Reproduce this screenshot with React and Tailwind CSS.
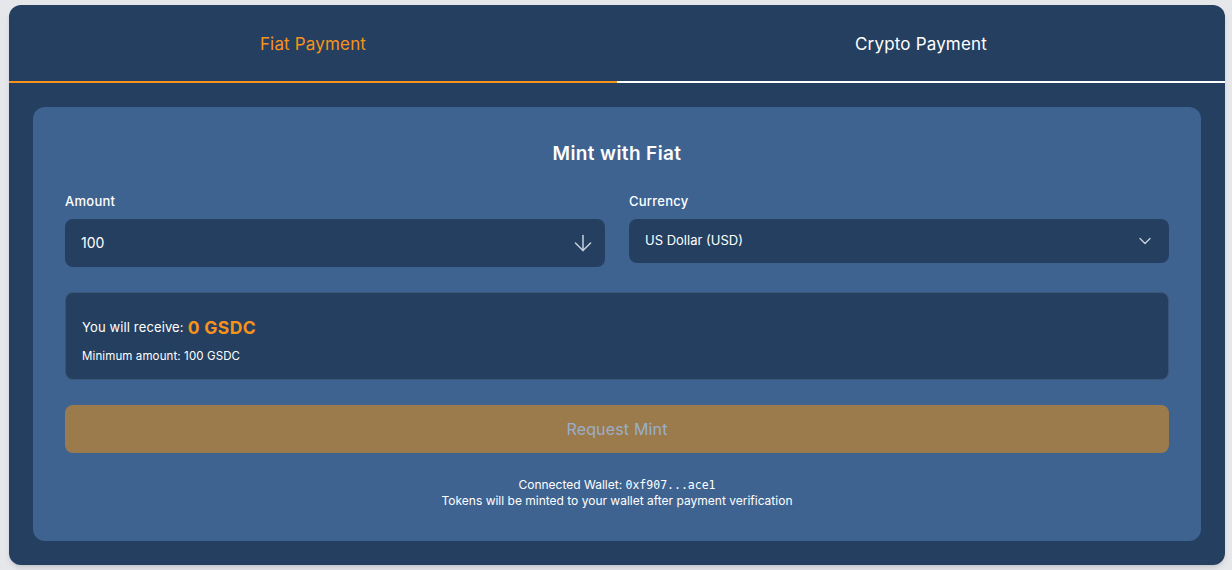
import { ArrowDown, ChevronDown } from "lucide-react";

export default function App() {
  return (
    <div
      className="min-h-[570px] w-full bg-[#e5e7eb] pl-[9px] pr-[7px] pt-[5px]"
      style={{ fontFamily: "Inter, 'Noto Sans', sans-serif" }}
    >
      <div className="overflow-hidden rounded-xl bg-[#253f60] shadow-md">
        <div className="flex">
          <button className="flex h-[78px] flex-1 items-center justify-center border-b-2 border-[#f7931a] pt-[3px] text-[17px] tracking-[0.01em] text-[#f7931a]">
            Fiat Payment
          </button>
          <button className="flex h-[78px] flex-1 items-center justify-center border-b-2 border-white pt-[3px] text-[17px] tracking-[0.01em] text-white">
            Crypto Payment
          </button>
        </div>

        <div className="p-6">
          <div className="rounded-xl bg-[#3e6390] px-8 pb-8 pt-[33px]">
            <h2 className="text-center text-[19px] leading-7 font-semibold tracking-[0.02em] text-white">
              Mint with Fiat
            </h2>

            <div className="mt-[23px] grid grid-cols-2 gap-6">
              <div>
                <label className="block text-[13px] leading-5 font-medium tracking-[0.02em] text-white">Amount</label>
                <div className="mt-2 flex h-12 items-center justify-between rounded-lg bg-[#253f60] pl-4 pr-[9px]">
                  <span className="text-sm text-white">100</span>
                  <ArrowDown className="h-[26px] w-[26px] text-[#c8d0dc]" strokeWidth={1.4} />
                </div>
              </div>
              <div>
                <label className="block text-[13px] leading-5 font-medium tracking-[0.02em] text-white">Currency</label>
                <div className="mt-2 flex h-11 items-center justify-between rounded-lg bg-[#253f60] pl-4 pr-[14px]">
                  <span className="text-[13px] text-white">US Dollar (USD)</span>
                  <ChevronDown className="h-5 w-5 text-[#c8d0dc]" strokeWidth={1.6} />
                </div>
              </div>
            </div>

            <div className="mt-[25px] h-[88px] rounded-lg border border-[#3b5577] bg-[#253f60] px-4 pt-[23px]">
              <div className="flex h-6 items-center text-[13px] tracking-[0.01em] text-white">
                You will receive:
                <span className="ml-1 text-[17.5px] font-bold tracking-[0.02em] text-[#f7931a]">0 GSDC</span>
              </div>
              <div className="mt-[8px] text-[11.5px] leading-4 tracking-[0.01em] text-white">
                Minimum amount: 100 GSDC
              </div>
            </div>

            <button className="mt-[25px] flex h-12 w-full items-center justify-center rounded-lg bg-[#9b7b4b] text-[16px] tracking-[0.01em] text-[#9aaecb]">
              Request Mint
            </button>

            <div className="mt-6 text-center text-[12px] leading-4 text-white">
              <div>
                Connected Wallet:{" "}
                <span style={{ fontFamily: "'DejaVu Sans Mono', monospace" }} className="text-[11.5px]">
                  0xf907...ace1
                </span>
              </div>
              <div>Tokens will be minted to your wallet after payment verification</div>
            </div>
          </div>
        </div>
      </div>
    </div>
  );
}
